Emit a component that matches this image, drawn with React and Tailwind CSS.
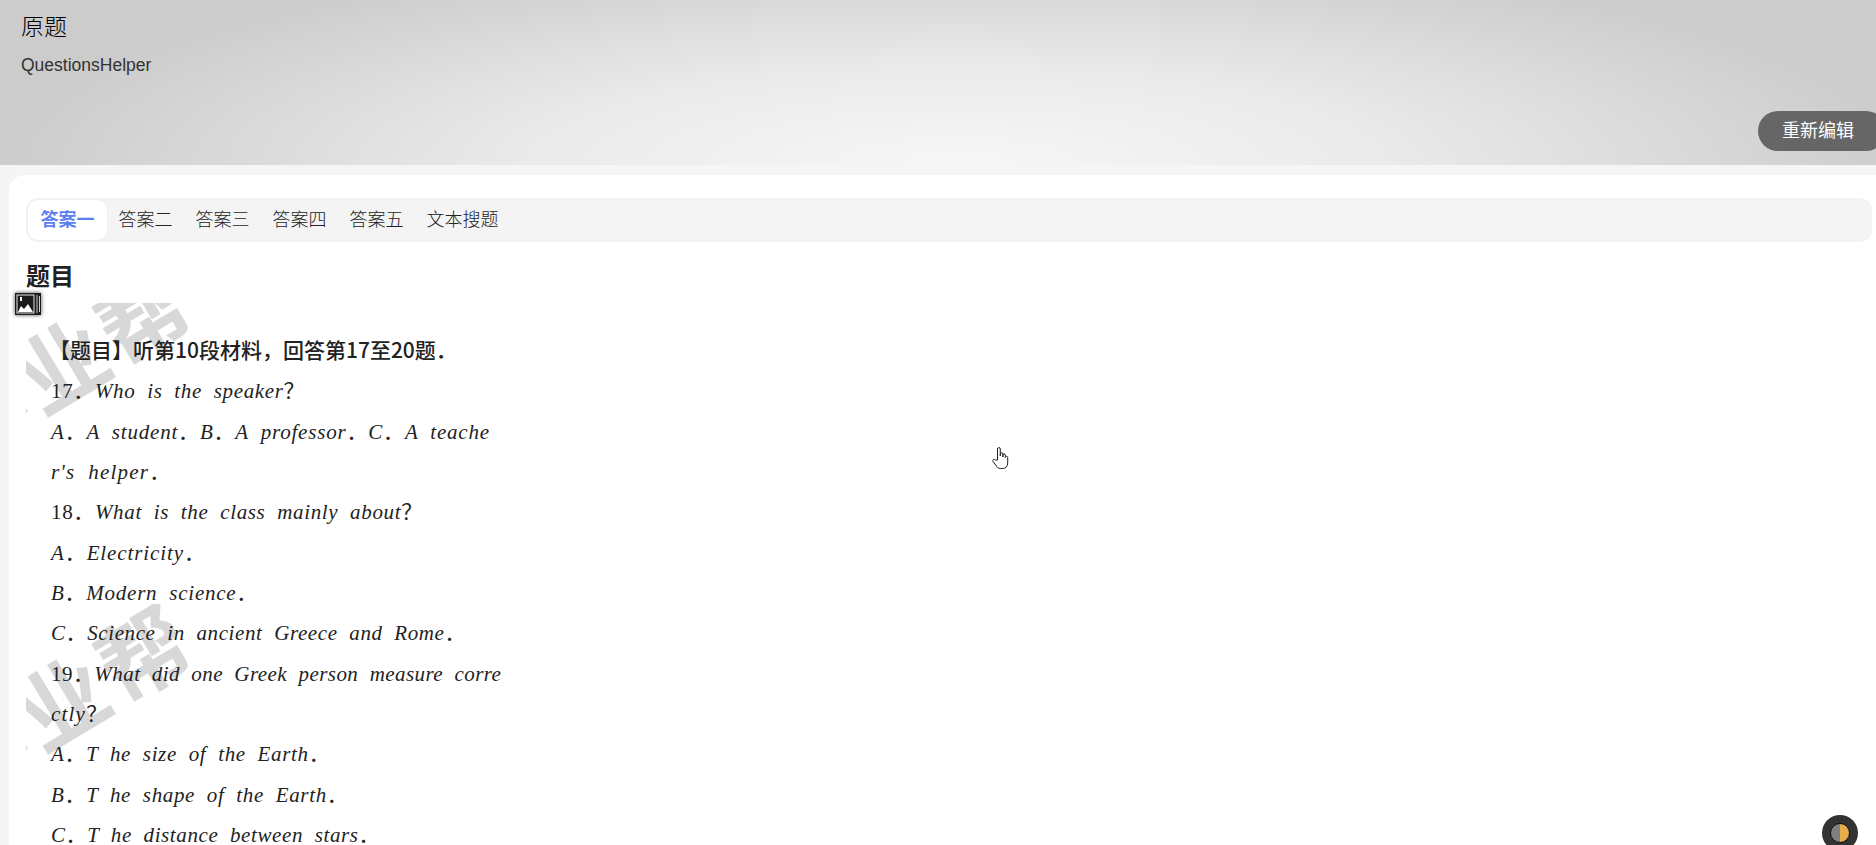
import React from "react";

const serif = "font-['Liberation_Serif','Noto_Sans_CJK_SC',serif]";

function M({ children }) {
  return <i className="italic">{children}</i>;
}

const lines = [
  { c: "tracking-normal", n: <b className="font-medium font-['Noto_Sans_CJK_SC',sans-serif] text-[21px] tracking-normal -ml-[2px]">【题目】听第10段材料，回答第17至20题．</b> },
  { c: "tracking-[0.65px]", n: <>17．<M>Who  is  the  speaker</M>？</> },
  { c: "tracking-[0.8px]", n: <><M>A</M>．<M>A  student</M>．<M>B</M>．<M>A  professor</M>．<M>C</M>．<M>A  teache</M></> },
  { c: "tracking-[1.2px]", n: <><M>r's  helper</M>．</> },
  { c: "tracking-[0.65px]", n: <>18．<M>What  is  the  class  mainly  about</M>？</> },
  { c: "tracking-[0.9px]", n: <><M>A</M>．<M>Electricity</M>．</> },
  { c: "tracking-[0.75px]", n: <><M>B</M>．<M>Modern  science</M>．</> },
  { c: "tracking-[0.6px]", n: <><M>C</M>．<M>Science  in  ancient  Greece  and  Rome</M>．</> },
  { c: "tracking-[0.44px]", n: <>19．<M>What  did  one  Greek  person  measure  corre</M></> },
  { c: "tracking-[1.2px]", n: <><M>ctly</M>？</> },
  { c: "tracking-[0.65px]", n: <><M>A</M>．<M>T  he  size  of  the  Earth</M>．</> },
  { c: "tracking-[0.65px]", n: <><M>B</M>．<M>T  he  shape  of  the  Earth</M>．</> },
  { c: "tracking-[0.6px]", n: <><M>C</M>．<M>T  he  distance  between  stars</M>．</> },
];

function Watermark({ className }) {
  return (
    <span className={`absolute left-[-104px] whitespace-nowrap font-['Noto_Sans_CJK_SC',sans-serif] font-bold text-[88px] tracking-[6px] leading-none text-[#d8d8d8] -rotate-[31deg] select-none ${className}`}>
      作业帮
    </span>
  );
}

export default function App() {
  const tabs = ["答案二", "答案三", "答案四", "答案五", "文本搜题"];
  return (
    <div className="relative h-[845px] overflow-hidden bg-[#f5f5f5] font-['Liberation_Sans','Noto_Sans_CJK_SC',sans-serif]">
      <header className="relative h-[165px] bg-[radial-gradient(ellipse_960px_220px_at_51%_100%,#f7f7f7_0%,#eaeaea_45%,#cccccc_100%)] pl-[21px] pt-[12px]">
        <h1 className="text-[23px] leading-[30px] font-light text-black">原题</h1>
        <p className="mt-[10px] text-[17.5px] leading-[26px] text-[#333]">QuestionsHelper</p>
        <button className="absolute right-[-10px] top-[111px] h-[40px] w-[128px] rounded-full bg-[#666666] pl-[24px] text-left text-[18px] text-white">
          重新编辑
        </button>
      </header>

      <main className="ml-[9px] mt-[10px] h-[700px] rounded-tl-[16px] bg-white pl-[17px] pt-[23px] pr-[4px]">
        <nav className="flex h-[44px] items-center rounded-[12px] bg-[#f4f4f4] pl-[2px] text-[18px] text-[#222]">
          <span className="flex h-[40px] items-center justify-center rounded-[10px] bg-white px-[12.500px] font-bold text-[#5b7ff0] shadow-[0_0_2px_rgba(0,0,0,0.08)]">
            答案一
          </span>
          {tabs.map((t) => (
            <span key={t} className="px-[11.500px] font-light">{t}</span>
          ))}
        </nav>

        <h2 className="mt-[19px] text-[24px] font-bold leading-[32px] text-[#222]">题目</h2>

        <div className="relative mt-[10px] h-[540px] w-[515px] overflow-hidden">
          <Watermark className="top-[13px]" />
          <Watermark className="top-[350px]" />
          <div className={`relative pl-[25px] pt-[26px] ${serif} text-[21px] leading-[40.35px] whitespace-pre text-[#222]`}>
            {lines.map((l, i) => (
              <div key={i} className={l.c}>{l.n}</div>
            ))}
          </div>
        </div>
      </main>

      <span className="absolute left-[13px] top-[291px] flex h-[26px] w-[30px] items-center justify-center">
        <svg width="30" height="26" viewBox="0 0 30 26" className="drop-shadow-[0_0_2px_rgba(0,0,0,0.7)]">
          <rect x="2" y="2" width="26" height="22" fill="#1b1b1b" />
          <rect x="4" y="4" width="17" height="18" fill="#1b1b1b" stroke="#e8e8e8" strokeWidth="1" />
          <path d="M5 21 L8 15 L11 18 L15 13 L20 21 Z" fill="#ffffff" />
          <rect x="7" y="6" width="2" height="4" fill="#ffffff" />
          <path d="M24 4 V22 M26.500 5 V21" stroke="#cccccc" strokeWidth="1" />
        </svg>
      </span>

      <svg className="absolute left-[992px] top-[446px]" width="18" height="24" viewBox="0 0 18 24" fill="#ffffff" stroke="#222222" strokeWidth="1">
        <path d="M5.5 14 V3 a1.4 1.4 0 0 1 2.8 0 V10 V8 a1.3 1.3 0 0 1 2.6 0 V11 V9 a1.2 1.2 0 0 1 2.4 0 V11.500 a1.200 1.200 0 0 1 2.400 0 V17 c0 3.500 -2 5.500 -5 5.500 h-2 c-2.500 0 -3.500 -1 -5 -3.500 L1 15.500 c-1 -1.500 1 -3 2.500 -1.500 Z" />
      </svg>

      <span className="absolute left-[1822px] top-[815px] flex h-[36px] w-[36px] items-center justify-center rounded-full bg-[#333333]">
        <span className="h-[20px] w-[20px] rounded-full border border-[#111] bg-[linear-gradient(90deg,#808080_50%,#e6ad4e_50%)]" />
      </span>
    </div>
  );
}
